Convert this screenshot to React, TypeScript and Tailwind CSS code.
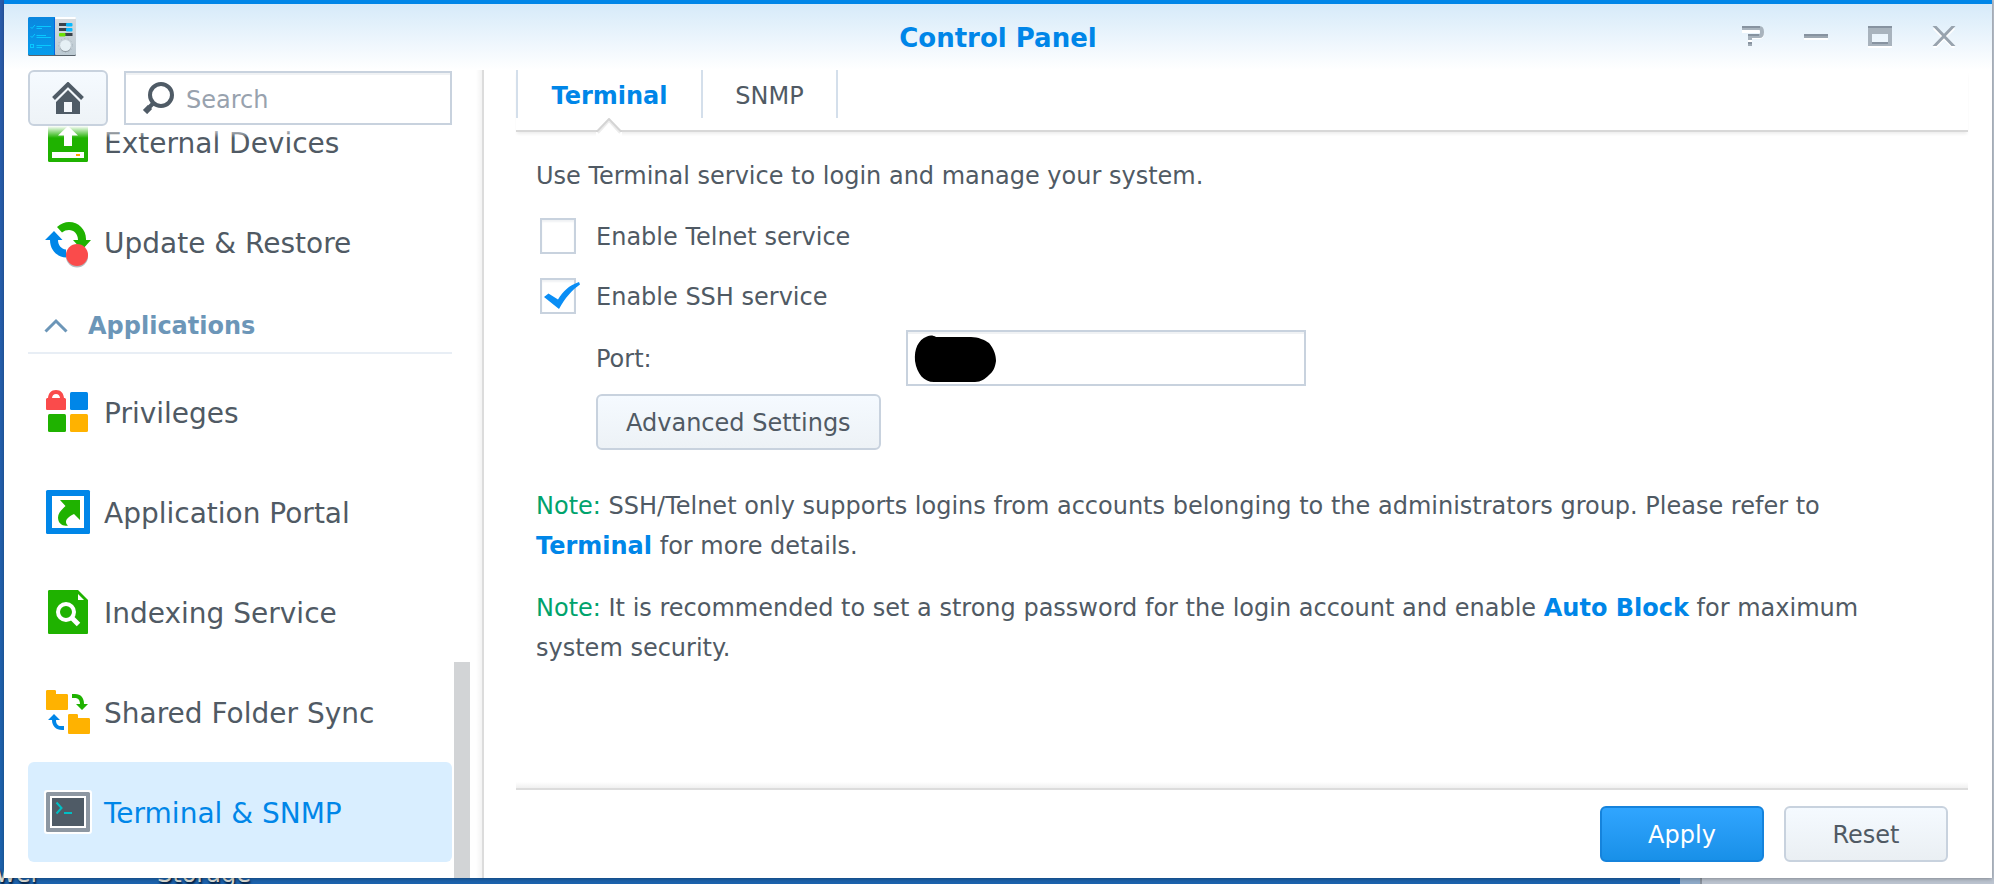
import type { ReactNode } from "react";

function AppIcon() {
  return (
    <svg width="48" height="40" viewBox="0 0 48 40" aria-hidden="true">
      <defs>
        <linearGradient id="app-blue" x1="0" y1="0" x2="0" y2="1">
          <stop offset="0" stopColor="#0a86de" />
          <stop offset="1" stopColor="#069cec" />
        </linearGradient>
        <linearGradient id="app-grey" x1="0" y1="0" x2="0" y2="1">
          <stop offset="0" stopColor="#d5dade" />
          <stop offset="1" stopColor="#bccad3" />
        </linearGradient>
      </defs>
      <rect x="0" y="2" width="48" height="37" rx="1.5" fill="#59636b" />
      <rect x="27" y="0" width="21" height="38" rx="1" fill="url(#app-grey)" />
      <rect x="27" y="0" width="21" height="2" rx="1" fill="#fff" />
      <path d="M1.500 0H27v38H1.500a1.500 1.500 0 0 1-1.500-1.500v-35A1.500 1.500 0 0 1 1.500 0z" fill="url(#app-blue)" />
      <rect x="26" y="1" width="1" height="37" fill="#0566e0" />
      <g stroke="#08c8ff" strokeWidth="1" fill="none">
        <path d="M8.500 9.500H23M8.500 11.500H14M8.500 18.500H18M8.500 20.500H23M8.500 28.500H23M8.500 30.500H14" />
        <path d="M2.500 10l1.500 1.500L7 8M2.500 19l1.500 1.500L7 17" />
        <rect x="2.500" y="27.500" width="3" height="3" />
      </g>
      <g>
        <rect x="31" y="6" width="8" height="3" fill="#3b444b" />
        <rect x="38" y="6" width="6.500" height="3.500" rx="1" fill="#08baff" />
        <rect x="31" y="11" width="8" height="3" fill="#3b444b" />
        <rect x="38" y="11" width="6.500" height="3.500" rx="1" fill="#08baff" />
        <rect x="37" y="16" width="7.500" height="3" fill="#3b444b" />
        <rect x="31" y="16" width="6.500" height="3.500" rx="1" fill="#6be005" />
      </g>
      <circle cx="37.500" cy="29.500" r="5.500" fill="#8d989f" />
      <circle cx="37.500" cy="28.500" r="5.500" fill="#e6f0f5" />
      <circle cx="37.500" cy="28.500" r="7" fill="none" stroke="#9aa5ad" strokeWidth="1" strokeDasharray="1 2.500" opacity=".6" />
    </svg>
  );
}

function ExternalDevicesIcon() {
  return (
    <svg width="48" height="48" viewBox="0 0 48 48" aria-hidden="true">
      <rect x="4" y="4" width="40" height="40" rx="1.500" fill="#1fb200" />
      <path d="M24 8l10 9.500h-6V28h-8V17.500h-6z" fill="#fff" />
      <rect x="8" y="34" width="32" height="6" fill="#fff" />
      <rect x="32" y="36" width="4" height="2" fill="#ffa800" />
    </svg>
  );
}

function UpdateIcon() {
  return (
    <svg className="overflow-visible" width="48" height="48" viewBox="0 0 48 48" aria-hidden="true">
      <path d="M13 9C17 5.500 21 4 25 4c9.500 0 17 7.500 17 17v1h5l-9 10-9-10h5c0-6-4-10-9-10-2.500 0-5 .8-7 2.500z" fill="#1fb200" />
      <path d="M10 13l8.500 9H14c0 5 3 9 8 9.500v8C13 39 6 32 6 22H1z" fill="#0086e8" />
      <circle cx="33" cy="38.500" r="11" fill="#b5bbbf" />
      <circle cx="33" cy="37" r="11" fill="#fa4b4b" />
    </svg>
  );
}

function PrivilegesIcon() {
  return (
    <svg width="48" height="48" viewBox="0 0 48 48" aria-hidden="true">
      <path d="M4 10C4.500 5 7 2 12 2s7.500 3 8 8c1.400 0 2 .6 2 1.600V20.500c0 1-.5 1.500-1.500 1.500h-17c-1 0-1.500-.5-1.500-1.500v-9c0-1 .6-1.500 2-1.500z" fill="#fa4b4b" />
      <path d="M8 10c.3-2.600 1.700-4 4-4s3.700 1.400 4 4z" fill="#fff" />
      <rect x="26" y="4" width="18" height="18" rx="1.500" fill="#0086e8" />
      <rect x="4" y="26" width="18" height="18" rx="1.500" fill="#1fb200" />
      <rect x="26" y="26" width="18" height="18" rx="1.500" fill="#ffb200" />
    </svg>
  );
}

function PortalIcon() {
  return (
    <svg width="48" height="48" viewBox="0 0 48 48" aria-hidden="true">
      <rect x="2" y="2" width="44" height="44" rx="1.500" fill="#0086e8" />
      <rect x="8" y="8" width="32" height="32" fill="#fff" />
      <path d="M16 12h20v20l-6-6c-4 2-8 4.500-8 8 0 1.500.8 2.800 2 3.500-5 1.200-10-2-10-8 0-4.500 3.500-7.500 7.500-11.500z" fill="#1fb200" />
    </svg>
  );
}

function IndexingIcon() {
  return (
    <svg width="48" height="48" viewBox="0 0 48 48" aria-hidden="true">
      <path d="M5.500 2H34l10 10v32.500c0 1-.5 1.500-1.500 1.500h-37c-1 0-1.500-.5-1.500-1.500v-41C4 2.500 4.500 2 5.500 2z" fill="#1fb200" />
      <path d="M34 6l6 6h-6z" fill="#fff" />
      <circle cx="22" cy="24" r="8" fill="none" stroke="#fff" strokeWidth="4" />
      <path d="M27.500 29.500l7 7" stroke="#fff" strokeWidth="5" />
    </svg>
  );
}

function FolderSyncIcon() {
  return (
    <svg width="48" height="48" viewBox="0 0 48 48" aria-hidden="true">
      <path d="M3.500 2h7c1 0 1.500.5 1.500 1.500V6h10.500c1 0 1.500.5 1.500 1.500v13c0 1-.5 1.500-1.500 1.500h-19C2.500 22 2 21.500 2 20.500v-17C2 2.500 2.500 2 3.500 2z" fill="#ffb200" />
      <path d="M25.500 26h7c1 0 1.500.5 1.500 1.500V30h10.500c1 0 1.500.5 1.500 1.500v13c0 1-.5 1.500-1.500 1.500h-19c-1 0-1.500-.5-1.500-1.500v-17c0-1 .5-1.500 1.500-1.500z" fill="#ffb200" />
      <path d="M28 6h3c6 0 9 4 9 10h4l-6 6-6-6h4c0-4-2-6-5-6h-3z" fill="#1fb200" />
      <path d="M20 42h-2c-6 0-10-4-10-10H4l6-6 6 6h-4c0 4 2 6 5 6h3z" fill="#0086e8" />
    </svg>
  );
}

function TerminalIcon() {
  return (
    <svg width="48" height="48" viewBox="0 0 48 48" aria-hidden="true">
      <rect x="0" y="2" width="48" height="44" rx="3" fill="#fff" />
      <rect x="2" y="4" width="44" height="40" rx="1.500" fill="#8d97a2" />
      <rect x="6" y="8" width="36" height="32" fill="#fff" />
      <rect x="8" y="10" width="32" height="28" fill="#4f5b66" />
      <path d="M12.500 14.500l5 5.500-5 5.500" fill="none" stroke="#00bfc4" strokeWidth="2" />
      <path d="M20 25h8" stroke="#00bfc4" strokeWidth="2" />
    </svg>
  );
}

function HomeIcon() {
  return (
    <svg width="32" height="32" viewBox="0 0 32 32" aria-hidden="true">
      <path d="M1.500 16.500L16 2.300l14.500 14.200" fill="none" stroke="#4f5b66" strokeWidth="4" />
      <path d="M16 8l12 12v12H20V20h-8v12H4V20z" fill="#4f5b66" />
      <rect x="12" y="20" width="8" height="10" rx="1" fill="#f3f7fb" />
      <rect x="4" y="30" width="24" height="2" fill="#4f5b66" />
    </svg>
  );
}

function SearchIcon() {
  return (
    <svg width="32" height="32" viewBox="0 0 32 32" aria-hidden="true">
      <circle cx="19" cy="13" r="11" fill="none" stroke="#4f5b66" strokeWidth="4" />
      <path d="M11 21.500L6.500 26" stroke="#4f5b66" strokeWidth="4" />
      <path d="M8 25L3 30" stroke="#4f5b66" strokeWidth="6" />
    </svg>
  );
}

type NavItem = { label: string; icon: ReactNode; active?: boolean };

const systemItems: NavItem[] = [
  { label: "External Devices", icon: <ExternalDevicesIcon /> },
  { label: "Update & Restore", icon: <UpdateIcon /> },
];

const applicationItems: NavItem[] = [
  { label: "Privileges", icon: <PrivilegesIcon /> },
  { label: "Application Portal", icon: <PortalIcon /> },
  { label: "Indexing Service", icon: <IndexingIcon /> },
  { label: "Shared Folder Sync", icon: <FolderSyncIcon /> },
  { label: "Terminal & SNMP", icon: <TerminalIcon />, active: true },
];

function NavLink({ item }: { item: NavItem }) {
  return (
    <a
      href="#"
      className={
        item.active
          ? "flex h-[100px] shrink-0 items-center gap-3 rounded-md bg-[#d9eeff] pl-4 text-[28px] text-[#0086e8]"
          : "flex h-[100px] shrink-0 items-center gap-3 rounded-md pl-4 text-[28px] text-[#505a64]"
      }
    >
      {item.icon}
      <span className="pt-1 whitespace-nowrap">{item.label}</span>
    </a>
  );
}

function TitleBar() {
  return (
    <header className="grid h-[66px] shrink-0 grid-cols-3 items-start bg-linear-to-b from-[#d6eaf9] to-white">
      <div className="pt-[13px] pl-6">
        <AppIcon />
      </div>
      <h1 className="pt-[18px] text-center text-[26px] leading-8 font-bold text-[#0086e8]">Control Panel</h1>
      <div className="flex justify-end gap-10 pt-[22px] pr-9">
        <button type="button" aria-label="Help">
          <svg width="24" height="22" viewBox="0 0 24 22" aria-hidden="true">
            <path d="M2 5h17q3 0 3 3t-3 3h-9v5" fill="none" stroke="#fff" strokeWidth="4" />
            <path d="M2 2h17.500q2.500 0 2.500 4t-2.500 4H10v4" fill="none" stroke="#a8b3bd" strokeWidth="4" />
            <path d="M2 1h18M8 9h11M8 17h4" fill="none" stroke="#8793a0" strokeWidth="2" />
            <path d="M8 19h4" stroke="#a0abb5" strokeWidth="2" />
          </svg>
        </button>
        <button type="button" aria-label="Minimize">
          <svg width="24" height="22" viewBox="0 0 24 22" aria-hidden="true">
            <path d="M0 13h24" stroke="#fff" strokeWidth="2" />
            <path d="M0 9h24" stroke="#8793a0" strokeWidth="2" />
            <path d="M0 11h24" stroke="#9ca7b1" strokeWidth="2" />
          </svg>
        </button>
        <button type="button" aria-label="Maximize">
          <svg width="24" height="22" viewBox="0 0 24 22" aria-hidden="true">
            <path d="M0 21h24" stroke="#fff" strokeWidth="2" />
            <path d="M0 0h24v20H0zM4 8v10h16V8z" fill="#a8b3bd" fillRule="evenodd" />
            <path d="M0 1h24M4 17h16" stroke="#8793a0" strokeWidth="2" />
          </svg>
        </button>
        <button type="button" aria-label="Close">
          <svg width="24" height="22" viewBox="0 0 24 22" aria-hidden="true">
            <path d="M2 2l20 20M22 2L2 22" stroke="#fff" strokeWidth="3" />
            <path d="M.5 0h4L12 7.700 19.500 0h4L13.900 10 23.500 20h-4L12 12.300 4.500 20h-4L10.100 10z" fill="#98a3ae" />
          </svg>
        </button>
      </div>
    </header>
  );
}

function Sidebar() {
  return (
    <aside className="flex w-[480px] shrink-0 flex-col border-r-2 border-[#dcdcdc] bg-linear-to-l from-[#f3f3f3] to-white to-[6px]">
      <div className="flex h-14 shrink-0 items-center gap-4 pr-[30px] pl-6">
        <button
          type="button"
          aria-label="Home"
          className="flex h-14 w-20 items-center justify-center rounded-md border-2 border-[#c8d2de] bg-linear-to-b from-[#f5faff] to-[#eef3f7]"
        >
          <HomeIcon />
        </button>
        <label className="flex h-[54px] min-w-0 flex-1 items-center gap-3 border-2 border-[#c8d2de] bg-white pl-4 inset-shadow-[0_2px_0_#f0f2f4]">
          <SearchIcon />
          <input
            type="text"
            aria-label="Search"
            placeholder="Search"
            className="min-w-0 flex-1 bg-transparent pt-1 text-[24px] text-[#505a64] outline-none placeholder:text-[#98a2ae]"
          />
        </label>
      </div>
      <div className="relative flex min-h-0 flex-1">
        <nav className="flex min-w-0 flex-1 flex-col justify-end overflow-hidden pb-4 pl-6">
          {systemItems.map((item) => (
            <NavLink key={item.label} item={item} />
          ))}
          <button
            type="button"
            className="mb-2 flex h-[62px] shrink-0 items-center gap-5 border-b-2 border-[#e8eef5] pt-2 pl-4 text-[24px] font-bold text-[#6c96b8]"
          >
            <svg width="24" height="16" viewBox="0 0 24 16" aria-hidden="true">
              <path d="M1.500 13.500L12 3l10.500 10.500" fill="none" stroke="#6c96b8" strokeWidth="3" />
            </svg>
            Applications
          </button>
          {applicationItems.map((item) => (
            <NavLink key={item.label} item={item} />
          ))}
        </nav>
        <div className="absolute top-0 left-6 h-3 w-[424px] bg-linear-to-b from-white to-transparent" />
        <div className="mr-2 flex w-[22px] flex-col justify-end pr-1 pl-[2px]">
          <div className="h-[216px] bg-[#d2d4d6]" />
        </div>
      </div>
    </aside>
  );
}

const boxClass =
  "size-9 appearance-none border-2 border-[#c8d2de] bg-white inset-shadow-[0_2px_2px_#f0f2f4]";

function TerminalForm() {
  return (
    <form className="flex flex-1 flex-col pl-5 text-[24px] leading-10">
      <p className="pt-6">Use Terminal service to login and manage your system.</p>
      <label className="mt-5 flex h-10 items-center gap-5 pl-1">
        <input type="checkbox" className={boxClass} />
        <span className="pt-[2px]">Enable Telnet service</span>
      </label>
      <label className="mt-5 flex h-10 items-center gap-5 pl-1">
        <span className="relative flex">
          <input type="checkbox" defaultChecked className={boxClass} />
          <svg className="pointer-events-none absolute top-0 left-0" width="42" height="36" viewBox="0 0 42 36" aria-hidden="true">
            <path d="M4 19l4.500-3.500 9.500 6C23 13 29 7.500 39 4l1 2.500C32 12 25 20 19 31z" fill="#0a8ef5" />
          </svg>
        </span>
        <span className="pt-[2px]">Enable SSH service</span>
      </label>
      <div className="mt-[14px] flex items-center pl-[60px]">
        <label htmlFor="port" className="w-[310px] pt-[2px]">
          Port:
        </label>
        <span className="relative flex">
          <input
            id="port"
            type="text"
            className="h-14 w-[400px] border-2 border-[#c8d2de] bg-white px-3 inset-shadow-[0_2px_0_#f0f2f4] outline-none"
          />
          <svg className="pointer-events-none absolute top-1 left-2" width="84" height="50" viewBox="0 0 84 50" aria-hidden="true">
            <path d="M13 2.500c3-1.500 6-1.500 9 .5h35c7 0 14 3 18 6 5 6 7 12 7 18-1 7-3 11-7 14-4 4-8 7-14 7H20C10 48 3 40 1 27 0 15 4 6 13 2.500z" fill="#000" />
          </svg>
        </span>
      </div>
      <div className="mt-2 pl-[60px]">
        <button
          type="button"
          className="flex h-14 items-center rounded-md border-2 border-[#c8d2de] bg-linear-to-b from-[#f5faff] to-[#edf2f6] px-7 pt-[2px]"
        >
          Advanced Settings
        </button>
      </div>
      <p className="mt-9 pr-20">
        <span className="text-[#00a36c]">Note:</span> SSH/Telnet only supports logins from accounts belonging to the
        administrators group. Please refer to{" "}
        <a href="#" className="font-bold text-[#0086e8]">
          Terminal
        </a>{" "}
        for more details.
      </p>
      <p className="mt-[22px] pr-20">
        <span className="text-[#00a36c]">Note:</span> It is recommended to set a strong password for the login account
        and enable{" "}
        <a href="#" className="font-bold text-[#0086e8]">
          Auto Block
        </a>{" "}
        for maximum system security.
      </p>
    </form>
  );
}

export default function App() {
  return (
    <div className="relative flex h-screen flex-col overflow-hidden bg-[#1f62b0] pr-[2px] pb-[6px] pl-1 font-['DejaVu_Sans',Verdana,sans-serif] text-[#505a64]">
      <div className="absolute inset-0 flex justify-end bg-linear-to-b from-[#2a5cac] to-[#1c63ae]" aria-hidden="true">
        <span className="absolute -bottom-1 -left-1 text-[24px] leading-7 text-[#dcdcd4] text-shadow-[1px_2px_2px_#001530]">wer</span>
        <span className="absolute -bottom-1 left-[157px] text-[24px] leading-7 text-[#dcdcd4] text-shadow-[1px_2px_2px_#001530]">Storage</span>
        <div className="w-5 bg-[#8fabc9]" />
        <div className="w-[294px] border-l-2 border-[#8a939e] bg-[#bcc4d0]" />
      </div>
      <main className="relative flex min-h-0 flex-1 flex-col border-t-4 border-[#0086e8] bg-white shadow-[0_1px_4px_rgba(0,0,0,0.3)]">
        <TitleBar />
        <div className="flex min-h-0 flex-1">
          <Sidebar />
          <section className="flex min-w-0 flex-1 flex-col pr-6 pl-8">
            <div className="relative flex h-[62px] shrink-0 border-b-2 border-[#d8d8d8] shadow-[0_3px_3px_-1px_#eeeeee]">
              <div role="tablist" className="flex h-12 border-l-2 border-[#d4dfeb] text-[24px]">
                <button type="button" role="tab" aria-selected="true" className="relative flex w-[185px] items-center justify-center border-r-2 border-[#d4dfeb] pt-1 font-bold text-[#0086e8]">
                  Terminal
                  <svg className="absolute top-12 left-[78px]" width="26" height="18" viewBox="0 0 26 18" aria-hidden="true">
                    <path d="M0 13L13 1l13 12v5H0z" fill="#fff" />
                    <path d="M2 15L13 3l11 12" fill="none" stroke="#ececec" strokeWidth="2" />
                    <path d="M0 13h1.500L13 1l11.500 12H26" fill="none" stroke="#d4d4d4" strokeWidth="2" />
                  </svg>
                </button>
                <button type="button" role="tab" aria-selected="false" className="flex w-[135px] items-center justify-center border-r-2 border-[#d4dfeb] pt-1">
                  SNMP
                </button>
              </div>
            </div>
            <TerminalForm />
            <footer className="flex h-[90px] shrink-0 flex-col">
              <div className="-mt-[6px] h-2 shrink-0 border-b-2 border-[#dcdcdc] bg-linear-to-b from-white to-[#f0f0f0]" />
              <div className="flex justify-end gap-5 pt-4 pr-5 text-[24px]">
                <button type="submit" className="h-14 w-[164px] rounded-md border-2 border-[#1583dc] bg-linear-to-b from-[#30a5ff] to-[#1890e8] pt-[2px] text-white">
                  Apply
                </button>
                <button type="reset" className="h-14 w-[164px] rounded-md border-2 border-[#c8d2de] bg-linear-to-b from-[#f5faff] to-[#eaeff3] pt-[2px]">
                  Reset
                </button>
              </div>
            </footer>
          </section>
        </div>
      </main>
    </div>
  );
}
